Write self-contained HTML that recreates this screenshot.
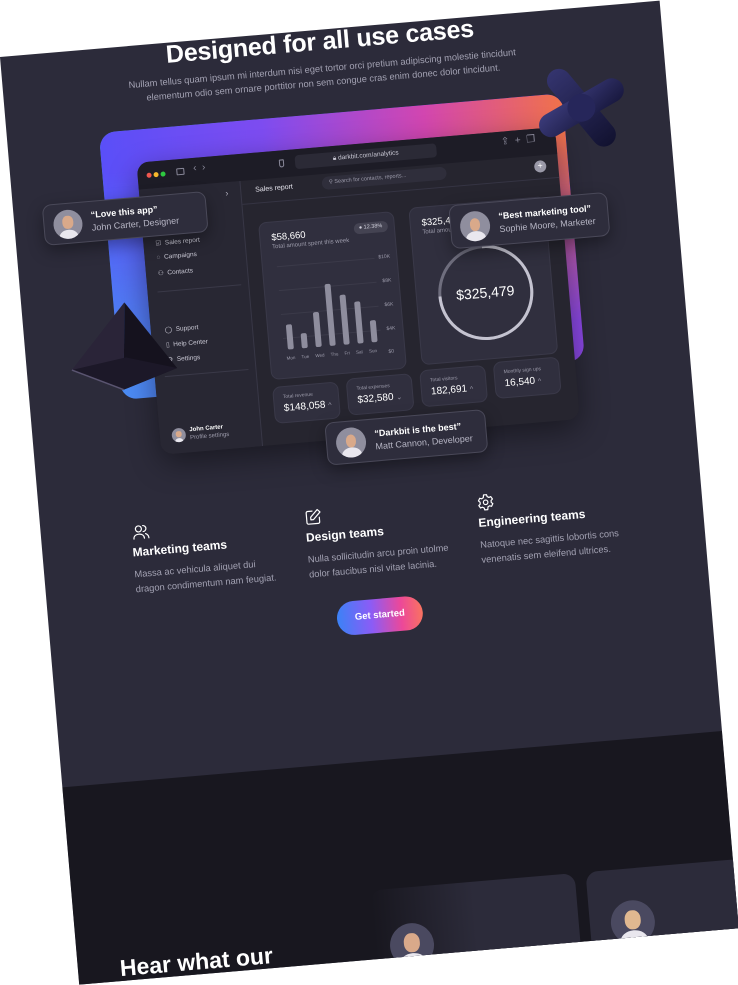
<!DOCTYPE html>
<html><head><meta charset="utf-8"><style>
*{margin:0;padding:0;box-sizing:border-box}
body{width:738px;height:983px;background:#fff;overflow:hidden;position:relative;font-family:"Liberation Sans",sans-serif}
#p{position:absolute;left:0;top:57px;width:662px;height:931px;transform:rotate(-4.88deg);transform-origin:0 0;background:#2c2b3a;overflow:hidden}
.a{position:absolute}
.t{position:absolute;white-space:nowrap}
.card{position:absolute;background:#302f3e;border:1px solid #3a3949;border-radius:8px}
.tc{position:absolute;background:#2e2d3c;border:1px solid #4a4959;border-radius:9px;box-shadow:0 6px 16px rgba(0,0,0,.35)}
.av{position:absolute;border-radius:50%;background:#8f8e9e;overflow:hidden}
.av i{position:absolute;left:32%;top:22%;width:36%;height:44%;border-radius:45%;background:#d9a98a}
.av b{position:absolute;left:18%;top:68%;width:64%;height:50%;border-radius:50% 50% 0 0;background:#e9e7ee}
.si{font-size:6.5px;color:#c9c8d4}
.sm{font-size:6px;color:#9c9bab}
</style></head><body>
<div id="p">
  <div class="a" style="left:0;top:733px;width:662px;height:200px;background:#18171f"></div>

  <div class="t" style="left:0;width:640px;top:-2px;text-align:center;font-size:25px;font-weight:700;color:#fff;letter-spacing:-.2px">Designed for all use cases</div>
  <div class="t" style="left:0;width:640px;top:33px;text-align:center;font-size:9.3px;color:#a3a2b3;line-height:13.5px">Nullam tellus quam ipsum mi interdum nisi eget tortor orci pretium adipiscing molestie tincidunt<br>elementum odio sem ornare porttitor non sem congue cras enim donec dolor tincidunt.</div>

  <div class="a" style="left:92px;top:84px;width:465px;height:268px;border-radius:16px;background:linear-gradient(90deg,#4a8cf2 0%,#6a5cf0 50%,#8c48e6 100%)"></div>
  <div class="a" style="left:92px;top:84px;width:465px;height:268px;border-radius:16px;background:linear-gradient(90deg,#5a4ff8 0%,#7d4cf0 35%,#d246b0 70%,#f0724a 100%);-webkit-mask-image:linear-gradient(180deg,#000 15%,transparent 85%);mask-image:linear-gradient(180deg,#000 15%,transparent 85%)"></div>

  <div class="a" style="left:127px;top:117px;width:420px;height:293px;border-radius:12px;background:#26252f;overflow:hidden;box-shadow:0 10px 30px rgba(0,0,0,.4)">
    <div class="a" style="left:0;top:0;width:420px;height:27px;background:#1d1c26"></div>
    <div class="a" style="left:9px;top:11px;width:5px;height:5px;border-radius:50%;background:#f0574f"></div>
    <div class="a" style="left:16px;top:11px;width:5px;height:5px;border-radius:50%;background:#f5b72c"></div>
    <div class="a" style="left:23px;top:11px;width:5px;height:5px;border-radius:50%;background:#2ec840"></div>
    <div class="a" style="left:39px;top:9px;width:8px;height:7px;border:1px solid #8a899a;border-radius:1px"></div>
    <div class="t" style="left:56px;top:5px;font-size:10px;color:#8a899a">‹ &nbsp;›</div>
    <div class="a" style="left:142px;top:9px;width:5px;height:8px;border:1px solid #8a899a;border-radius:1px 1px 3px 3px"></div>
    <div class="a" style="left:158px;top:6px;width:142px;height:14px;border-radius:4px;background:#2b2a36"></div>
    <div class="t" style="left:158px;width:142px;top:9px;text-align:center;font-size:6.5px;color:#c9c8d4">🔒︎ darkbit.com/analytics</div>
    <div class="t" style="left:365px;top:5px;font-size:10px;color:#8a899a">⇪ &nbsp;+ &nbsp;❐</div>
    <div class="a" style="left:396px;top:32px;width:12px;height:12px;border-radius:50%;background:#9a99a8;color:#fff;font-size:9px;line-height:11px;text-align:center">+</div>
    <div class="a" style="left:0;top:27px;width:102px;height:270px;background:#282733;border-right:1px solid #383746"></div>
    <div class="t" style="left:86px;top:33px;font-size:9px;color:#b0afbd">›</div>
    <div class="t si" style="left:12px;top:78px">☑&nbsp; Sales report</div>
    <div class="t si" style="left:12px;top:93px">◌&nbsp; Campaigns</div>
    <div class="t si" style="left:12px;top:108px">⚇&nbsp; Contacts</div>
    <div class="a" style="left:10px;top:130px;width:84px;height:1px;background:#3a3948"></div>
    <div class="t si" style="left:14px;top:165px">◯&nbsp; Support</div>
    <div class="t si" style="left:14px;top:180px">▯&nbsp; Help Center</div>
    <div class="t si" style="left:14px;top:195px">⚙&nbsp; Settings</div>
    <div class="a" style="left:10px;top:215px;width:84px;height:1px;background:#3a3948"></div>
    <div class="av" style="left:12px;top:268px;width:14px;height:14px"><i></i><b></b></div>
    <div class="t" style="left:30px;top:268px;font-size:6px;color:#fff;font-weight:700">John Carter</div>
    <div class="t sm" style="left:30px;top:276px">Profile settings</div>
    <div class="t" style="left:116px;top:34px;font-size:7px;color:#e6e5ee">Sales report</div>
    <div class="a" style="left:183px;top:30px;width:125px;height:13px;border-radius:7px;background:#2f2e3b"></div>
    <div class="t" style="left:190px;top:33px;font-size:5.5px;color:#9c9bab">⚲ Search for contacts, reports...</div>
    <div class="a" style="left:102px;top:50px;width:318px;height:1px;background:#353443"></div>
    <div class="card" style="left:116px;top:70px;width:136px;height:158px">
      <div class="t" style="left:11px;top:10px;font-size:9.5px;color:#fff">$58,660</div>
      <div class="t sm" style="left:11px;top:22px">Total amount spent this week</div>
      <div class="a" style="left:94px;top:8px;width:34px;height:11px;border-radius:6px;background:#444352"></div>
      <div class="t" style="left:99px;top:10px;font-size:5.5px;color:#d0cfdb">● 12.38%</div>
      <div class="a" style="left:14px;top:44px;width:98px;height:1px;background:#3b3a49"></div>
      <div class="a" style="left:14px;top:68px;width:98px;height:1px;background:#3b3a49"></div>
      <div class="a" style="left:14px;top:92px;width:98px;height:1px;background:#3b3a49"></div>
      <div class="a" style="left:14px;top:116px;width:98px;height:1px;background:#3b3a49"></div>
      <div class="t sm" style="left:116px;top:41px;font-size:5px">$10K</div>
      <div class="t sm" style="left:118px;top:65px;font-size:5px">$8K</div>
      <div class="t sm" style="left:118px;top:89px;font-size:5px">$6K</div>
      <div class="t sm" style="left:118px;top:113px;font-size:5px">$4K</div>
      <div class="t sm" style="left:118px;top:136px;font-size:5px">$0</div>
      <div class="a" style="left:18px;bottom:28px;width:6px;height:25px;border-radius:2px;background:#8e8d9d"></div>
      <div class="a" style="left:32px;bottom:28px;width:6px;height:15px;border-radius:2px;background:#8e8d9d"></div>
      <div class="a" style="left:46px;bottom:28px;width:6px;height:35px;border-radius:2px;background:#8e8d9d"></div>
      <div class="a" style="left:60px;bottom:28px;width:6px;height:62px;border-radius:2px;background:#8e8d9d"></div>
      <div class="a" style="left:74px;bottom:28px;width:6px;height:50px;border-radius:2px;background:#8e8d9d"></div>
      <div class="a" style="left:88px;bottom:28px;width:6px;height:42px;border-radius:2px;background:#8e8d9d"></div>
      <div class="a" style="left:102px;bottom:28px;width:6px;height:22px;border-radius:2px;background:#8e8d9d"></div>
      <div class="t sm" style="left:16px;top:134px;font-size:4.5px;word-spacing:5px">Mon Tue Wed Thu Fri Sat Sun</div>
    </div>
    <div class="card" style="left:267px;top:68px;width:137px;height:158px">
      <div class="t" style="left:11px;top:10px;font-size:9.5px;color:#fff">$325,479</div>
      <div class="t sm" style="left:11px;top:22px">Total amount</div>
      <svg class="a" style="left:19px;top:40px" width="100" height="100" viewBox="0 0 100 100"><circle cx="50" cy="50" r="46" fill="none" stroke="#6f6e7e" stroke-width="3"/><path d="M50 4 A46 46 0 1 1 4 50" fill="none" stroke="#c4c3d0" stroke-width="3"/></svg>
      <div class="t" style="left:0;width:137px;top:82px;text-align:center;font-size:14px;color:#fff">$325,479</div>
    </div>
    <div class="card" style="left:116px;top:235px;width:66px;height:37px"><div class="t sm" style="left:9px;top:7px;font-size:5px">Total revenue</div><div class="t" style="left:9px;top:16px;font-size:10px;color:#fff">$148,058 <span style="font-size:7px;color:#9c9bab">^</span></div></div>
    <div class="card" style="left:190px;top:233px;width:66px;height:37px"><div class="t sm" style="left:9px;top:7px;font-size:5px">Total expenses</div><div class="t" style="left:9px;top:16px;font-size:10px;color:#fff">$32,580 <span style="font-size:7px;color:#9c9bab">⌄</span></div></div>
    <div class="card" style="left:264px;top:231px;width:66px;height:37px"><div class="t sm" style="left:9px;top:7px;font-size:5px">Total visitors</div><div class="t" style="left:9px;top:16px;font-size:10px;color:#fff">182,691 <span style="font-size:7px;color:#9c9bab">^</span></div></div>
    <div class="card" style="left:338px;top:229px;width:66px;height:37px"><div class="t sm" style="left:9px;top:7px;font-size:5px">Monthly sign ups</div><div class="t" style="left:9px;top:16px;font-size:10px;color:#fff">16,540 <span style="font-size:7px;color:#9c9bab">^</span></div></div>
  </div>

  <!-- X object (jack) -->
  <svg class="a" style="left:520px;top:45px" width="110" height="110" viewBox="0 0 110 110">
    <defs><linearGradient id="g1" x1="0" y1="0" x2="1" y2="1"><stop offset="0" stop-color="#3c3c7c"/><stop offset="1" stop-color="#17173c"/></linearGradient>
    <linearGradient id="g2" x1="0" y1="0" x2="0" y2="1"><stop offset="0" stop-color="#34346e"/><stop offset="1" stop-color="#121230"/></linearGradient></defs>
    <rect x="43" y="8" width="24" height="94" rx="12" fill="url(#g2)" transform="rotate(-35 55 55)"/>
    <rect x="8" y="43" width="94" height="24" rx="12" fill="url(#g1)" transform="rotate(-25 55 55)"/>
    <circle cx="55" cy="55" r="14" fill="#26265a"/>
  </svg>
  <svg class="a" style="left:40px;top:250px" width="115" height="105" viewBox="0 0 115 105">
    <polygon points="63,5 5,68 55,92" fill="#2a2438"/>
    <polygon points="63,5 55,92 110,75" fill="#15121e"/>
    <polygon points="5,68 55,92 110,75 60,60" fill="#1c1828"/>
    <line x1="5" y1="68" x2="55" y2="92" stroke="#5a5470" stroke-width="1.5"/>
  </svg>

  <div class="tc" style="left:29px;top:151px;width:164px;height:41px">
    <div class="av" style="left:9px;top:6px;width:29px;height:29px"><i></i><b></b></div>
    <div class="t" style="left:47px;top:8px;font-size:9px;font-weight:700;color:#fff">“Love this app”</div>
    <div class="t" style="left:47px;top:21px;font-size:9px;color:#b8b7c6">John Carter, Designer</div>
  </div>
  <div class="tc" style="left:434px;top:186px;width:159px;height:44px">
    <div class="av" style="left:9px;top:7px;width:30px;height:30px"><i></i><b></b></div>
    <div class="t" style="left:48px;top:9px;font-size:9px;font-weight:700;color:#fff">“Best marketing tool”</div>
    <div class="t" style="left:48px;top:22px;font-size:9px;color:#b8b7c6">Sophie Moore, Marketer</div>
  </div>
  <div class="tc" style="left:292px;top:392px;width:161px;height:43px">
    <div class="av" style="left:9px;top:6px;width:30px;height:30px"><i></i><b></b></div>
    <div class="t" style="left:48px;top:9px;font-size:9px;font-weight:700;color:#fff">“Darkbit is the best”</div>
    <div class="t" style="left:48px;top:22px;font-size:9px;color:#b8b7c6">Matt Cannon, Developer</div>
  </div>

  <svg class="a" style="left:91px;top:476px" width="18" height="18" viewBox="0 0 24 24" fill="none" stroke="#fff" stroke-width="1.6" stroke-linecap="round"><circle cx="9" cy="8" r="4"/><path d="M2 21c0-4 3-6 7-6s7 2 7 6"/><path d="M15 4a4 4 0 0 1 0 8M18 15c2 1 4 3 4 6"/></svg>
  <div class="t" style="left:90px;top:498px;font-size:12px;font-weight:700;color:#fff">Marketing teams</div>
  <div class="t" style="left:90px;top:520px;font-size:9.3px;color:#a3a2b3;line-height:15px">Massa ac vehicula aliquet dui<br>dragon condimentum nam feugiat.</div>

  <svg class="a" style="left:264px;top:476px" width="18" height="18" viewBox="0 0 24 24" fill="none" stroke="#fff" stroke-width="1.6" stroke-linecap="round" stroke-linejoin="round"><path d="M11 4H5a2 2 0 0 0-2 2v13a2 2 0 0 0 2 2h13a2 2 0 0 0 2-2v-6"/><path d="M18 2.5l3.5 3.5L12 15.5H8.5V12z"/></svg>
  <div class="t" style="left:264px;top:498px;font-size:12px;font-weight:700;color:#fff">Design teams</div>
  <div class="t" style="left:264px;top:520px;font-size:9.3px;color:#a3a2b3;line-height:15px">Nulla sollicitudin arcu proin utolme<br>dolor faucibus nisl vitae lacinia.</div>

  <svg class="a" style="left:437px;top:476px" width="18" height="18" viewBox="0 0 24 24" fill="none" stroke="#fff" stroke-width="1.6" stroke-linejoin="round"><circle cx="12" cy="12" r="3"/><path d="M10 2h4l.6 2.6 2.3 1.3 2.5-.9 2 3.4-2 1.8v2.6l2 1.8-2 3.4-2.5-.9-2.3 1.3L14 22h-4l-.6-2.6-2.3-1.3-2.5.9-2-3.4 2-1.8v-2.6l-2-1.8 2-3.4 2.5.9 2.3-1.3z"/></svg>
  <div class="t" style="left:437px;top:498px;font-size:12px;font-weight:700;color:#fff">Engineering teams</div>
  <div class="t" style="left:437px;top:520px;font-size:9.3px;color:#a3a2b3;line-height:15px">Natoque nec sagittis lobortis cons<br>venenatis sem eleifend ultrices.</div>

  <div class="a" style="left:288px;top:572px;width:86px;height:34px;border-radius:17px;background:linear-gradient(90deg,#3b82f6,#8b5cf6 40%,#ec4899 75%,#f97360);color:#fff;font-size:9.5px;font-weight:700;text-align:center;line-height:34px">Get started</div>

  <div class="a" style="left:298px;top:862px;width:205px;height:90px;border-radius:12px;background:linear-gradient(90deg,rgba(45,44,59,0) 0%,#2c2b3a 50%)"></div>
  <div class="a" style="left:514px;top:862px;width:200px;height:90px;border-radius:12px;background:#2c2b3a"></div>
  <div class="av" style="left:313px;top:898px;width:44px;height:44px;background:#4a4960"><i></i><b></b></div>
  <div class="av" style="left:535px;top:894px;width:44px;height:44px;background:#4a4960"><i style="background:#e0b890"></i><b></b></div>
  <div class="t" style="left:42px;top:905px;font-size:23px;font-weight:700;color:#fff">Hear what our</div>
</div>
</body></html>
